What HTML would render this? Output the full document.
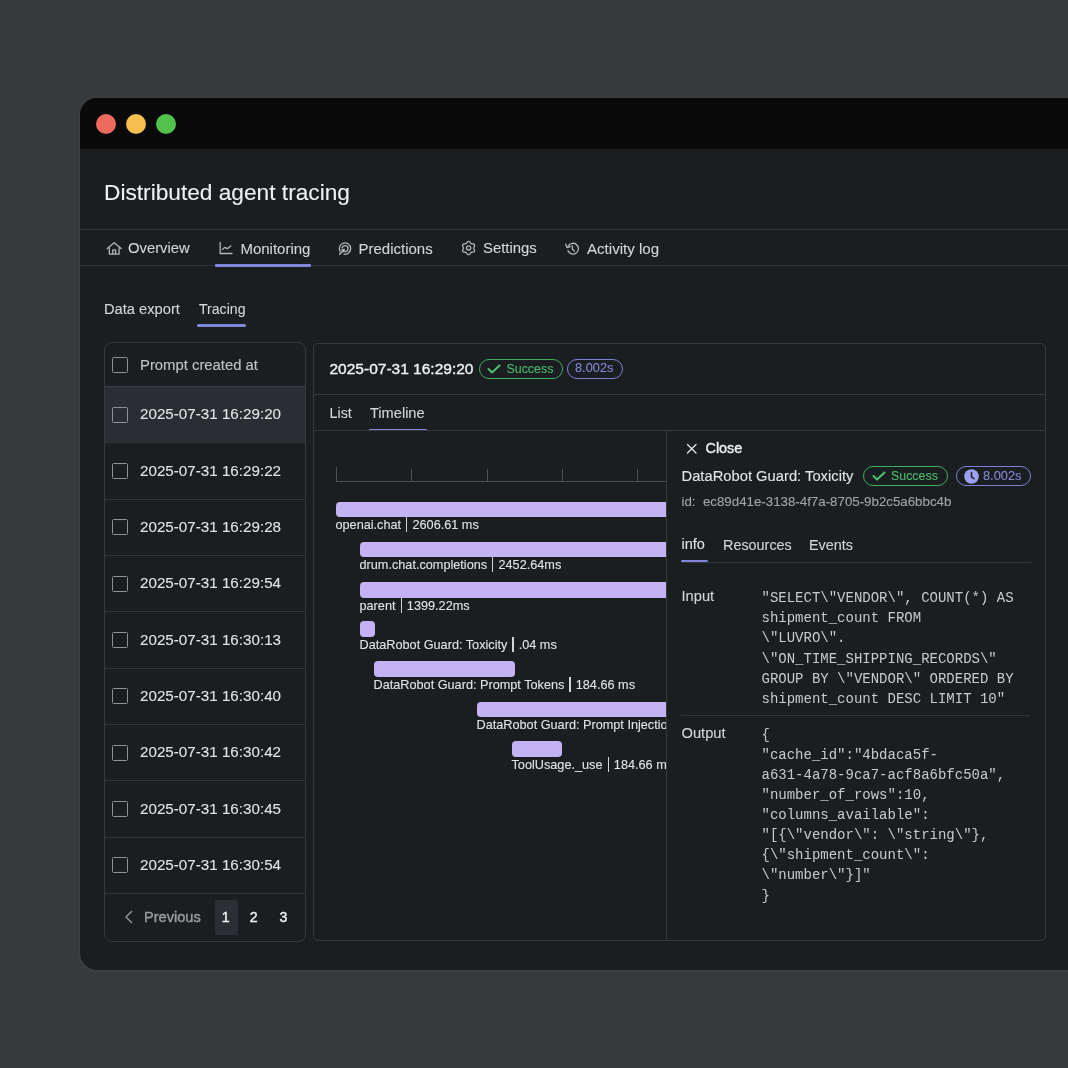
<!DOCTYPE html>
<html><head><meta charset="utf-8">
<style>
*{box-sizing:border-box;margin:0;padding:0}
html,body{width:1068px;height:1068px;overflow:hidden;background:#38393b;font-family:"Liberation Sans",sans-serif}
.t,.tm{position:absolute;white-space:nowrap;line-height:1}
.t{-webkit-text-stroke:0.1px currentColor}
.tm{font-family:"Liberation Mono",monospace}
.r{position:absolute}
</style></head><body><div style="position:absolute;left:0;top:0;width:1068px;height:1068px;will-change:transform">
<div class="r" style="left:80px;top:98px;width:1010px;height:872px;background:#1b1e21;border-radius:0px;border-radius:17px 0 0 17px;box-shadow:0 0 0 1px rgba(255,255,255,0.035), 0 2px 2px rgba(255,255,255,0.02)"></div>
<div class="r" style="left:80px;top:98px;width:1010px;height:51px;background:#0a0a0b;border-radius:0px;border-radius:17px 0 0 0"></div>
<div class="r" style="left:96px;top:113.5px;width:20px;height:20px;background:#ec6a5e;border-radius:10px;"></div>
<div class="r" style="left:126px;top:113.5px;width:20px;height:20px;background:#f4bf4f;border-radius:10px;"></div>
<div class="r" style="left:156px;top:113.5px;width:20px;height:20px;background:#53c24c;border-radius:10px;"></div>
<div class="t" style="left:104.00px;top:181.48px;font-size:22.7px;color:#f0f1f2;">Distributed agent tracing</div>
<div class="r" style="left:80px;top:229px;width:988px;height:1px;background:#303338;border-radius:0px;"></div>
<div class="r" style="left:80px;top:265px;width:988px;height:1px;background:#303338;border-radius:0px;"></div>
<div class="t" style="left:128.00px;top:241.17px;font-size:14.8px;color:#d5d6d8;">Overview</div>
<div class="t" style="left:240.40px;top:241.00px;font-size:15px;color:#d5d6d8;">Monitoring</div>
<div class="t" style="left:358.50px;top:241.00px;font-size:15px;color:#d5d6d8;">Predictions</div>
<div class="t" style="left:483.00px;top:241.08px;font-size:14.9px;color:#d5d6d8;">Settings</div>
<div class="t" style="left:587.00px;top:240.91px;font-size:15.1px;color:#d5d6d8;">Activity log</div>
<div class="r" style="left:215px;top:264px;width:96px;height:2.5px;background:#8086da;border-radius:1px;"></div>
<div class="t" style="left:104.00px;top:301.65px;font-size:14.7px;color:#d5d6d8;">Data export</div>
<div class="t" style="left:199.00px;top:302.16px;font-size:14.1px;color:#d5d6d8;">Tracing</div>
<div class="r" style="left:197px;top:324px;width:49px;height:3px;background:#8086da;border-radius:1.5px;"></div>
<div class="r" style="left:103.5px;top:342px;width:202.5px;height:600px;background:#1b1e21;border:1px solid #36393e;border-radius:8px;"></div>
<div class="r" style="left:105px;top:386px;width:200px;height:57px;background:#2a2d31;border-radius:0px;"></div>
<div class="r" style="left:105px;top:442.33px;width:200px;height:1px;background:#303338;border-radius:0px;"></div>
<div class="r" style="left:105px;top:498.65999999999997px;width:200px;height:1px;background:#303338;border-radius:0px;"></div>
<div class="r" style="left:105px;top:554.99px;width:200px;height:1px;background:#303338;border-radius:0px;"></div>
<div class="r" style="left:105px;top:611.3199999999999px;width:200px;height:1px;background:#303338;border-radius:0px;"></div>
<div class="r" style="left:105px;top:667.65px;width:200px;height:1px;background:#303338;border-radius:0px;"></div>
<div class="r" style="left:105px;top:723.98px;width:200px;height:1px;background:#303338;border-radius:0px;"></div>
<div class="r" style="left:105px;top:780.31px;width:200px;height:1px;background:#303338;border-radius:0px;"></div>
<div class="r" style="left:105px;top:836.64px;width:200px;height:1px;background:#303338;border-radius:0px;"></div>
<div class="r" style="left:105px;top:386px;width:200px;height:1px;background:#3a3d42;border-radius:0px;"></div>
<div class="r" style="left:105px;top:893px;width:200px;height:1px;background:#303338;border-radius:0px;"></div>
<div class="r" style="left:112px;top:356.7px;width:16px;height:16px;background:transparent;border:1px solid #8d8f93;border-radius:1.5px;"></div>
<div class="t" style="left:140.00px;top:357.83px;font-size:14.85px;color:#c4c5c8;">Prompt created at</div>
<div class="r" style="left:112px;top:406.6px;width:16px;height:16px;background:transparent;border:1px solid #8d8f93;border-radius:1.5px;"></div>
<div class="t" style="left:140.00px;top:406.33px;font-size:15.2px;color:#e2e3e5;">2025-07-31 16:29:20</div>
<div class="r" style="left:112px;top:462.93px;width:16px;height:16px;background:transparent;border:1px solid #8d8f93;border-radius:1.5px;"></div>
<div class="t" style="left:140.00px;top:462.66px;font-size:15.2px;color:#e2e3e5;">2025-07-31 16:29:22</div>
<div class="r" style="left:112px;top:519.26px;width:16px;height:16px;background:transparent;border:1px solid #8d8f93;border-radius:1.5px;"></div>
<div class="t" style="left:140.00px;top:518.99px;font-size:15.2px;color:#e2e3e5;">2025-07-31 16:29:28</div>
<div class="r" style="left:112px;top:575.59px;width:16px;height:16px;background:transparent;border:1px solid #8d8f93;border-radius:1.5px;"></div>
<div class="t" style="left:140.00px;top:575.32px;font-size:15.2px;color:#e2e3e5;">2025-07-31 16:29:54</div>
<div class="r" style="left:112px;top:631.9200000000001px;width:16px;height:16px;background:transparent;border:1px solid #8d8f93;border-radius:1.5px;"></div>
<div class="t" style="left:140.00px;top:631.65px;font-size:15.2px;color:#e2e3e5;">2025-07-31 16:30:13</div>
<div class="r" style="left:112px;top:688.25px;width:16px;height:16px;background:transparent;border:1px solid #8d8f93;border-radius:1.5px;"></div>
<div class="t" style="left:140.00px;top:687.98px;font-size:15.2px;color:#e2e3e5;">2025-07-31 16:30:40</div>
<div class="r" style="left:112px;top:744.58px;width:16px;height:16px;background:transparent;border:1px solid #8d8f93;border-radius:1.5px;"></div>
<div class="t" style="left:140.00px;top:744.31px;font-size:15.2px;color:#e2e3e5;">2025-07-31 16:30:42</div>
<div class="r" style="left:112px;top:800.9100000000001px;width:16px;height:16px;background:transparent;border:1px solid #8d8f93;border-radius:1.5px;"></div>
<div class="t" style="left:140.00px;top:800.64px;font-size:15.2px;color:#e2e3e5;">2025-07-31 16:30:45</div>
<div class="r" style="left:112px;top:857.24px;width:16px;height:16px;background:transparent;border:1px solid #8d8f93;border-radius:1.5px;"></div>
<div class="t" style="left:140.00px;top:856.97px;font-size:15.2px;color:#e2e3e5;">2025-07-31 16:30:54</div>
<svg class="r" style="left:124px;top:910px;" width="10" height="14" viewBox="0 0 10 14" fill="none"><path d="M7.5 1.5 L2 7 L7.5 12.5" stroke="#8b8d91" stroke-width="1.6" stroke-linecap="round" stroke-linejoin="round"/></svg>
<div class="t" style="left:144.00px;top:909.94px;font-size:14.6px;color:#9a9ca0;-webkit-text-stroke:0.4px #9a9ca0;">Previous</div>
<div class="r" style="left:214.5px;top:899.5px;width:23px;height:35px;background:#2b2f34;border-radius:3px;"></div>
<div class="t" style="left:221.70px;top:910.28px;font-size:14.2px;color:#f0f0f0;-webkit-text-stroke:0.4px #f0f0f0;">1</div>
<div class="t" style="left:249.80px;top:910.28px;font-size:14.2px;color:#f0f0f0;-webkit-text-stroke:0.4px #f0f0f0;">2</div>
<div class="t" style="left:279.50px;top:910.28px;font-size:14.2px;color:#f0f0f0;-webkit-text-stroke:0.4px #f0f0f0;">3</div>
<div class="r" style="left:313px;top:343px;width:733px;height:598px;background:#1b1e21;border:1px solid #36393e;border-radius:5px;"></div>
<div class="r" style="left:314px;top:394px;width:731px;height:1px;background:#36393e;border-radius:0px;"></div>
<div class="r" style="left:314px;top:429.5px;width:731px;height:1px;background:#36393e;border-radius:0px;"></div>
<div class="t" style="left:329.50px;top:360.68px;font-size:15.5px;color:#eeeff0;-webkit-text-stroke:0.4px #eeeff0;">2025-07-31 16:29:20</div>
<div class="r" style="left:478.5px;top:359px;width:84.5px;height:20px;background:transparent;border:1px solid #3fae5f;border-radius:10px;"></div>
<svg class="r" style="left:487px;top:364px;" width="14" height="10" viewBox="0 0 14 10" fill="none"><path d="M1.5 5 L5 8.5 L12.5 1.5" stroke="#4cc070" stroke-width="2" stroke-linecap="round" stroke-linejoin="round"/></svg>
<div class="t" style="left:506.50px;top:362.50px;font-size:12.4px;color:#4cba6c;">Success</div>
<div class="r" style="left:567px;top:359px;width:55.5px;height:20px;background:transparent;border:1px solid #7d81d6;border-radius:10px;"></div>
<div class="t" style="left:575.00px;top:362.16px;font-size:12.8px;color:#8387d4;">8.002s</div>
<div class="t" style="left:329.50px;top:406.29px;font-size:14.3px;color:#d5d6d8;">List</div>
<div class="t" style="left:370.00px;top:406.04px;font-size:14.6px;color:#d5d6d8;">Timeline</div>
<div class="r" style="left:368.5px;top:428.5px;width:58px;height:1.6px;background:#8086da;border-radius:1px;"></div>
<div class="r" style="left:336px;top:481px;width:330px;height:1px;background:#4c4f54;border-radius:0px;"></div>
<div class="r" style="left:336px;top:466.5px;width:1px;height:14.5px;background:#4c4f54;border-radius:0px;"></div>
<div class="r" style="left:411.3px;top:468.5px;width:1px;height:12.5px;background:#4c4f54;border-radius:0px;"></div>
<div class="r" style="left:486.6px;top:468.5px;width:1px;height:12.5px;background:#4c4f54;border-radius:0px;"></div>
<div class="r" style="left:562px;top:468.5px;width:1px;height:12.5px;background:#4c4f54;border-radius:0px;"></div>
<div class="r" style="left:637.3px;top:468.5px;width:1px;height:12.5px;background:#4c4f54;border-radius:0px;"></div>
<div class="r" style="left:314px;top:431px;width:352px;height:508px;overflow:hidden">
<div class="r" style="left:22px;top:70.5px;width:340px;height:15.5px;background:#c4b2f5;border-radius:4px"></div>
<div class="t" style="left:21.5px;top:86.45px;font-size:12.7px;color:#e2e3e5">openai.chat <span style='display:inline-block;width:1px;height:15px;background:#c8c9cc;vertical-align:-3px;margin:0 1.5px;width:1.3px;background:#d3d4d7'></span> 2606.61 ms</div>
<div class="r" style="left:46px;top:110.5px;width:320px;height:15.5px;background:#c4b2f5;border-radius:4px"></div>
<div class="t" style="left:45.5px;top:126.45px;font-size:12.7px;color:#e2e3e5">drum.chat.completions <span style='display:inline-block;width:1px;height:15px;background:#c8c9cc;vertical-align:-3px;margin:0 1.5px;width:1.3px;background:#d3d4d7'></span> 2452.64ms</div>
<div class="r" style="left:46px;top:151px;width:320px;height:15.5px;background:#c4b2f5;border-radius:4px"></div>
<div class="t" style="left:45.5px;top:166.95px;font-size:12.7px;color:#e2e3e5">parent <span style='display:inline-block;width:1px;height:15px;background:#c8c9cc;vertical-align:-3px;margin:0 1.5px;width:1.3px;background:#d3d4d7'></span> 1399.22ms</div>
<div class="r" style="left:46px;top:190px;width:14.5px;height:15.5px;background:#c4b2f5;border-radius:4px"></div>
<div class="t" style="left:45.5px;top:205.95px;font-size:12.7px;color:#e2e3e5">DataRobot Guard: Toxicity <span style='display:inline-block;width:1px;height:15px;background:#c8c9cc;vertical-align:-3px;margin:0 1.5px;width:1.3px;background:#d3d4d7'></span> .04 ms</div>
<div class="r" style="left:60px;top:230px;width:141px;height:15.5px;background:#c4b2f5;border-radius:4px"></div>
<div class="t" style="left:59.5px;top:245.95px;font-size:12.7px;color:#e2e3e5">DataRobot Guard: Prompt Tokens <span style='display:inline-block;width:1px;height:15px;background:#c8c9cc;vertical-align:-3px;margin:0 1.5px;width:1.3px;background:#d3d4d7'></span> 184.66 ms</div>
<div class="r" style="left:163px;top:270.5px;width:200px;height:15.5px;background:#c4b2f5;border-radius:4px"></div>
<div class="t" style="left:162.5px;top:286.45px;font-size:12.7px;color:#e2e3e5">DataRobot Guard: Prompt Injection <span style='display:inline-block;width:1px;height:15px;background:#c8c9cc;vertical-align:-3px;margin:0 1.5px;width:1.3px;background:#d3d4d7'></span> 184.66 ms</div>
<div class="r" style="left:198px;top:310px;width:50px;height:15.5px;background:#c4b2f5;border-radius:4px"></div>
<div class="t" style="left:197.5px;top:325.95px;font-size:12.7px;color:#e2e3e5">ToolUsage._use <span style='display:inline-block;width:1px;height:15px;background:#c8c9cc;vertical-align:-3px;margin:0 1.5px;width:1.3px;background:#d3d4d7'></span> 184.66 ms</div>
</div>
<div class="r" style="left:665.5px;top:431px;width:1px;height:509px;background:#36393e;border-radius:0px;"></div>
<svg class="r" style="left:685.5px;top:443px;" width="12" height="11" viewBox="0 0 12 11" fill="none"><path d="M1.5 1.5 L10 10 M10 1.5 L1.5 10" stroke="#e6e7e9" stroke-width="1.3" stroke-linecap="round"/></svg>
<div class="t" style="left:705.50px;top:441.01px;font-size:14.4px;color:#eeeff0;-webkit-text-stroke:0.4px #eeeff0;">Close</div>
<div class="t" style="left:681.50px;top:468.81px;font-size:14.75px;color:#e2e3e5;">DataRobot Guard: Toxicity</div>
<div class="r" style="left:863px;top:466px;width:85px;height:20px;background:transparent;border:1px solid #3fae5f;border-radius:10px;"></div>
<svg class="r" style="left:871.5px;top:471px;" width="14" height="10" viewBox="0 0 14 10" fill="none"><path d="M1.5 5 L5 8.5 L12.5 1.5" stroke="#4cc070" stroke-width="2" stroke-linecap="round" stroke-linejoin="round"/></svg>
<div class="t" style="left:891.00px;top:470.20px;font-size:12.4px;color:#4cba6c;">Success</div>
<div class="r" style="left:955.5px;top:466px;width:75.5px;height:20px;background:transparent;border:1px solid #7d81d6;border-radius:10px;"></div>
<svg class="r" style="left:963.5px;top:468.5px;" width="15" height="15" viewBox="0 0 15 15" fill="none"><circle cx="7.5" cy="7.5" r="7.3" fill="#9da2f0"/><path d="M7.5 3.5 V7.8 L10 9.6" stroke="#1b1e21" stroke-width="1.5" stroke-linecap="round"/></svg>
<div class="t" style="left:983.00px;top:470.16px;font-size:12.8px;color:#8387d4;">8.002s</div>
<div class="t" style="left:681.50px;top:495.44px;font-size:13.3px;color:#a3a5a9;">id:&nbsp; ec89d41e-3138-4f7a-8705-9b2c5a6bbc4b</div>
<div class="t" style="left:681.50px;top:537.42px;font-size:14.5px;color:#e2e3e5;">info</div>
<div class="t" style="left:723.00px;top:537.51px;font-size:14.4px;color:#d5d6d8;">Resources</div>
<div class="t" style="left:809.00px;top:537.51px;font-size:14.4px;color:#d5d6d8;">Events</div>
<div class="r" style="left:681px;top:561.5px;width:350px;height:1px;background:#303338;border-radius:0px;"></div>
<div class="r" style="left:681px;top:560.2px;width:27px;height:2px;background:#8086da;border-radius:1px;"></div>
<div class="t" style="left:681.50px;top:589.05px;font-size:14.7px;color:#d5d6d8;">Input</div>
<div class="t" style="left:681.50px;top:725.85px;font-size:14.7px;color:#d5d6d8;">Output</div>
<div class="r" style="left:681px;top:714.5px;width:349px;height:1px;background:#303338;border-radius:0px;"></div>
<div class="tm" style="left:761.50px;top:591.27px;font-size:14px;color:#c9cacd;">"SELECT\"VENDOR\", COUNT(*) AS</div>
<div class="tm" style="left:761.50px;top:611.37px;font-size:14px;color:#c9cacd;">shipment_count FROM</div>
<div class="tm" style="left:761.50px;top:631.47px;font-size:14px;color:#c9cacd;">\"LUVRO\".</div>
<div class="tm" style="left:761.50px;top:651.57px;font-size:14px;color:#c9cacd;">\"ON_TIME_SHIPPING_RECORDS\"</div>
<div class="tm" style="left:761.50px;top:671.67px;font-size:14px;color:#c9cacd;">GROUP BY \"VENDOR\" ORDERED BY</div>
<div class="tm" style="left:761.50px;top:691.77px;font-size:14px;color:#c9cacd;">shipment_count DESC LIMIT 10"</div>
<div class="tm" style="left:761.50px;top:727.77px;font-size:14px;color:#c9cacd;">{</div>
<div class="tm" style="left:761.50px;top:747.87px;font-size:14px;color:#c9cacd;">"cache_id":"4bdaca5f-</div>
<div class="tm" style="left:761.50px;top:767.97px;font-size:14px;color:#c9cacd;">a631-4a78-9ca7-acf8a6bfc50a",</div>
<div class="tm" style="left:761.50px;top:788.07px;font-size:14px;color:#c9cacd;">"number_of_rows":10,</div>
<div class="tm" style="left:761.50px;top:808.17px;font-size:14px;color:#c9cacd;">"columns_available":</div>
<div class="tm" style="left:761.50px;top:828.27px;font-size:14px;color:#c9cacd;">"[{\"vendor\": \"string\"},</div>
<div class="tm" style="left:761.50px;top:848.37px;font-size:14px;color:#c9cacd;">{\"shipment_count\":</div>
<div class="tm" style="left:761.50px;top:868.47px;font-size:14px;color:#c9cacd;">\"number\"}]"</div>
<div class="tm" style="left:761.50px;top:888.57px;font-size:14px;color:#c9cacd;">}</div>
<svg class="r" style="left:0;top:0" width="1068" height="1068" viewBox="0 0 1068 1068" fill="none"><path d="M107.3 248.6 L114.2 242.7 L121.1 248.6" stroke="#b4b6b9" stroke-width="1.3" stroke-linecap="round" stroke-linejoin="round"/><path d="M109.3 247.2 V254.1 H119.1 V247.2" stroke="#b4b6b9" stroke-width="1.3" stroke-linejoin="round"/><path d="M112.8 254.1 V249.9 H115.6 V254.1" stroke="#b4b6b9" stroke-width="1.3" stroke-linejoin="round"/><path d="M220.2 242.6 V253.5 H232" stroke="#b4b6b9" stroke-width="1.3" stroke-linecap="round" stroke-linejoin="round"/><path d="M222.4 249.6 L224.7 247.4 L227.3 248.7 L230.8 246" stroke="#b4b6b9" stroke-width="1.3" stroke-linecap="round" stroke-linejoin="round"/><path d="M340.06 251.45 A5.7 5.7 0 1 1 344.01 254.21" stroke="#b4b6b9" stroke-width="1.3" stroke-linecap="round"/><path d="M342.05 248.08 A3.0 3.0 0 1 1 345.00 251.60" stroke="#b4b6b9" stroke-width="1.3" stroke-linecap="round"/><path d="M339.6 254.2 L344.2 249.6" stroke="#b4b6b9" stroke-width="1.5" stroke-linecap="round"/><path d="M344.9 248.9 L340.7 249.6 L344.2 253.1 Z" fill="#b4b6b9"/><path d="M468.60 241.30 L468.95 241.35 L469.28 241.49 L469.60 241.71 L469.88 241.99 L470.13 242.30 L470.35 242.62 L470.55 242.93 L470.74 243.20 L470.93 243.42 L471.15 243.58 L471.40 243.69 L471.69 243.75 L472.02 243.78 L472.38 243.80 L472.77 243.83 L473.17 243.89 L473.55 243.99 L473.90 244.15 L474.19 244.37 L474.40 244.65 L474.53 244.98 L474.58 245.34 L474.55 245.72 L474.45 246.10 L474.30 246.47 L474.13 246.82 L473.96 247.15 L473.82 247.45 L473.73 247.73 L473.70 248.00 L473.73 248.27 L473.82 248.55 L473.96 248.85 L474.13 249.18 L474.30 249.53 L474.45 249.90 L474.55 250.28 L474.58 250.66 L474.53 251.02 L474.40 251.35 L474.19 251.63 L473.90 251.85 L473.55 252.01 L473.17 252.11 L472.77 252.17 L472.38 252.20 L472.02 252.22 L471.69 252.25 L471.40 252.31 L471.15 252.42 L470.93 252.58 L470.74 252.80 L470.55 253.07 L470.35 253.38 L470.13 253.70 L469.88 254.01 L469.60 254.29 L469.28 254.51 L468.95 254.65 L468.60 254.70 L468.25 254.65 L467.92 254.51 L467.60 254.29 L467.32 254.01 L467.07 253.70 L466.85 253.38 L466.65 253.07 L466.46 252.80 L466.27 252.58 L466.05 252.42 L465.80 252.31 L465.51 252.25 L465.18 252.22 L464.82 252.20 L464.43 252.17 L464.03 252.11 L463.65 252.01 L463.30 251.85 L463.01 251.63 L462.80 251.35 L462.67 251.02 L462.62 250.66 L462.65 250.28 L462.75 249.90 L462.90 249.53 L463.07 249.18 L463.24 248.85 L463.38 248.55 L463.47 248.27 L463.50 248.00 L463.47 247.73 L463.38 247.45 L463.24 247.15 L463.07 246.82 L462.90 246.47 L462.75 246.10 L462.65 245.72 L462.62 245.34 L462.67 244.98 L462.80 244.65 L463.01 244.37 L463.30 244.15 L463.65 243.99 L464.03 243.89 L464.43 243.83 L464.82 243.80 L465.18 243.78 L465.51 243.75 L465.80 243.69 L466.05 243.58 L466.27 243.42 L466.46 243.20 L466.65 242.93 L466.85 242.62 L467.07 242.30 L467.32 241.99 L467.60 241.71 L467.92 241.49 L468.25 241.35 L468.60 241.30 Z" stroke="#b4b6b9" stroke-width="1.3" stroke-linejoin="round"/><circle cx="468.6" cy="248.0" r="2.1" stroke="#b4b6b9" stroke-width="1.3"/><path d="M567.93 246.85 A5.4 5.4 0 1 1 567.93 250.55" stroke="#b4b6b9" stroke-width="1.3" stroke-linecap="round"/><path d="M565.8 244.2 L566.9 247.6 L570.3 246.6" stroke="#b4b6b9" stroke-width="1.3" stroke-linecap="round" stroke-linejoin="round"/><path d="M572.4 245.9 V249.3 L574.4 251" stroke="#b4b6b9" stroke-width="1.3" stroke-linecap="round" stroke-linejoin="round"/></svg>
</div></body></html>
